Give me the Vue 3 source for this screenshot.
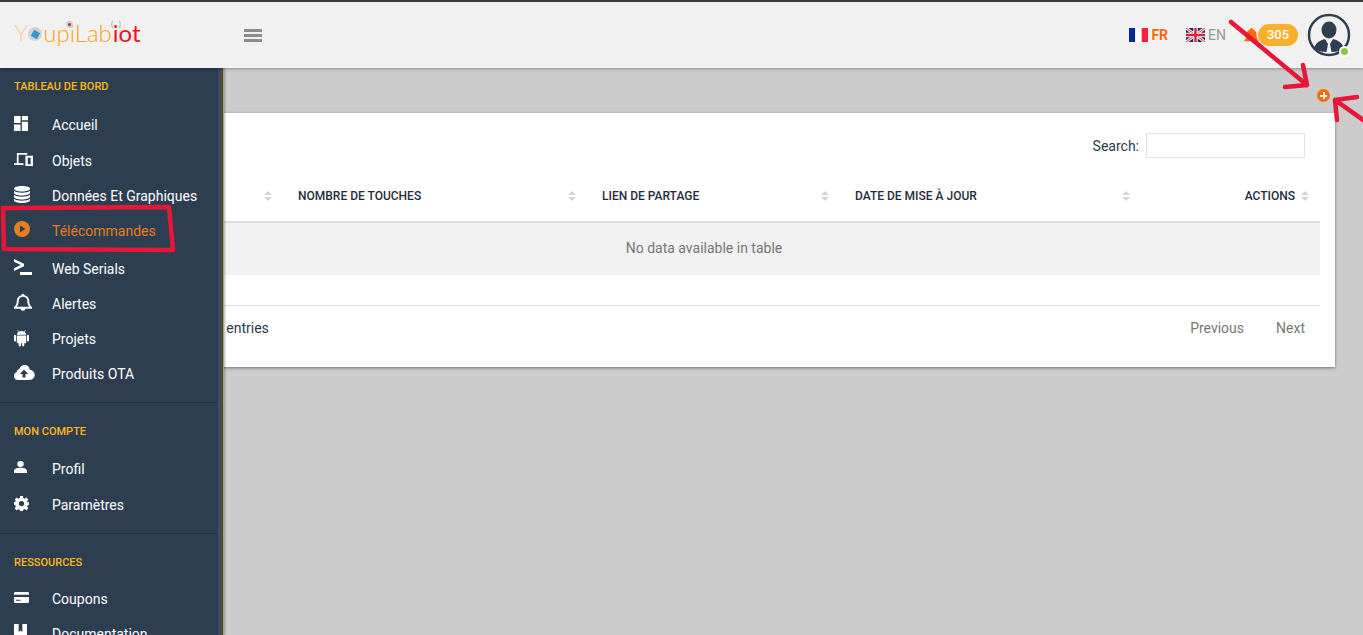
<script setup>
const main = [
  { label: 'Accueil', w: 14, h: 15, view: '0 0 16 16', d: 'M0 0h7.500v7.500H0zM9 0h7v4.500H9zM9 6h7v10H9zM0 9h7.500v7H0z', cls: 'first' },
  { label: 'Objets', w: 19, h: 13, view: '0 0 20 14', d: 'M3 0h11v1.800H4.800V11H10v2H0v-2h3zM12 3h8v11h-8zM14.500 5v7h3V5z', cls: 'r36' },
  { label: 'Données Et Graphiques', w: 16, h: 17, view: '0 0 16 17', d: 'M8 0c4.200 0 8 1 8 2.700S12.200 5.400 8 5.400 0 4.400 0 2.700 3.800 0 8 0zM0 4.800C1.500 6.200 5 6.700 8 6.700s6.500-.5 8-1.900v2C16 8.500 12.200 9.500 8 9.500S0 8.500 0 6.800zM0 8.800c1.500 1.400 5 1.900 8 1.900s6.500-.5 8-1.900v2c0 1.700-3.800 2.700-8 2.700s-8-1-8-2.700zM0 12.800c1.500 1.400 5 1.900 8 1.900s6.500-.5 8-1.900v1.500C16 16 12.200 17 8 17s-8-1-8-2.700z' },
  { label: 'Télécommandes', w: 16, h: 16, view: '0 0 16 16', d: 'M8 0a8 8 0 1 1 0 16A8 8 0 0 1 8 0zM6 4.500v7L11.500 8z', active: true },
  { label: 'Web Serials', w: 18, h: 16, view: '0 0 18 16', d: 'M0 0l10 4.800v2.400L0 12V9.300L6.800 6 0 2.700zM6 13h12v3H6z', cls: 'r38' },
  { label: 'Alertes', w: 18, h: 17, view: '0 0 16 18', d: 'M8 0c.8 0 1.300.5 1.300 1.200C11.900 1.800 13.500 4 13.500 7c0 4 1 5.500 2.500 7v1.500H10.200a2.200 2.200 0 0 1-4.400 0H0V14c1.500-1.500 2.500-3 2.500-7C2.500 4 4.100 1.800 6.700 1.200 6.700.5 7.200 0 8 0zM8 2.800C5.700 2.800 4.200 4.700 4.200 7c0 3.200-.6 5.200-1.700 6.500h11C12.400 12.200 11.800 10.200 11.800 7 11.800 4.700 10.300 2.800 8 2.800z' },
  { label: 'Projets', w: 15, h: 17, view: '0 0 16 18', d: 'M4 1l1.300 1.800a6 6 0 0 1 5.400 0L12 1l.6.400-1.200 1.900A4.500 4.500 0 0 1 13 6H3a4.500 4.500 0 0 1 1.600-2.700L3.400 1.400zM3 7h10v7a1 1 0 0 1-1 1h-1v2.200a1.200 1.200 0 0 1-2.400 0V15H7.400v2.200a1.200 1.200 0 0 1-2.400 0V15H4a1 1 0 0 1-1-1zM0 7.200a1 1 0 0 1 2.200 0v5a1 1 0 0 1-2.200 0zM13.800 7.200a1 1 0 0 1 2.200 0v5a1 1 0 0 1-2.200 0z' },
  { label: 'Produits OTA', w: 20, h: 15, view: '0 0 20 15', d: 'M10.500 0c2.800 0 5 2 5.300 4.800A5 5 0 0 1 15.500 15H4a4 4 0 0 1-1.500-7.700A5 5 0 0 1 5.500 3.500 5.500 5.500 0 0 1 10.500 0zM10 4.500L5.800 9H8.500v3.500h3V9h2.700z' }
]
const account = [
  { label: 'Profil', w: 13, h: 12, view: '0 0 14 14', d: 'M7 0a3.500 3.500 0 1 1 0 7A3.500 3.500 0 0 1 7 0zM0 14v-2c0-2.500 2.500-4 7-4s7 1.500 7 4v2z' },
  { label: 'Paramètres', w: 15, h: 15, view: '0 0 16 16', d: 'M6.500 0h3l.4 2.200 1.400.6L13.200 1.500l2.100 2.100L14 5.500l.6 1.400L16 6.500v3l-1.400.4-.6 1.400 1.300 1.900-2.100 2.100-1.900-1.300-1.400.6L9.500 16h-3l-.4-1.400-1.400-.6-1.900 1.300L.7 13.200 2 11.300l-.6-1.400L0 9.500v-3l1.400-.4.6-1.400L.7 3.600 2.800 1.500l1.900 1.300 1.400-.6zM8 5.200a2.800 2.800 0 1 0 0 5.600 2.800 2.800 0 0 0 0-5.600z' }
]
const resources = [
  { label: 'Coupons', w: 15, h: 11, view: '0 0 16 12', d: 'M1.500 0h13A1.500 1.500 0 0 1 16 1.500V3H0V1.500A1.500 1.500 0 0 1 1.500 0zM0 5.500h16v5a1.500 1.500 0 0 1-1.500 1.500h-13A1.500 1.500 0 0 1 0 10.500zM2 8.500v1h5v-1z' },
  { label: 'Documentation', w: 13, h: 16, view: '0 0 14 16', d: 'M1 0h13v16H1a1 1 0 0 1-1-1V1a1 1 0 0 1 1-1zM5 0v8l2-1.500L9 8V0z' }
]
const columns = [
  { label: '' },
  { label: 'Nombre de touches' },
  { label: 'Lien de partage' },
  { label: 'Date de mise à jour' },
  { label: 'Actions', right: true }
]
</script>

<template>
  <div class="page">
    <header class="topbar">
      <div class="logo">
        <span class="logo-y">Y</span><span class="logo-o"><i></i></span><span class="logo-lab">upiLab</span><span class="logo-iot">iot</span>
        <i class="logo-dot"></i>
        <svg class="logo-wifi" viewBox="0 0 12 10" fill="none" stroke="#c4c4c4" stroke-width="1.500"><path d="M2.500 1C.8 3.500.8 6.500 2.500 9M9.500 1c1.700 2.500 1.700 5.500 0 8" /></svg>
      </div>
      <button class="burger" aria-label="menu"><i></i><i></i><i></i></button>
      <div class="top-right">
        <span class="lang active">
          <svg class="flag" viewBox="0 0 19 14"><rect width="6.300" height="14" fill="#002a8f"/><rect x="6.300" width="6.400" height="14" fill="#fff"/><rect x="12.700" width="6.300" height="14" fill="#f5213f"/></svg>
          FR
        </span>
        <span class="lang">
          <svg class="flag" viewBox="0 0 19 14"><rect width="19" height="14" fill="#1c2a6b"/><path d="M0 0l19 14M19 0L0 14" stroke="#fff" stroke-width="2.800"/><path d="M0 0l19 14M19 0L0 14" stroke="#d8203a" stroke-width="1"/><path d="M9.500 0v14M0 7h19" stroke="#fff" stroke-width="4.400"/><path d="M9.500 0v14M0 7h19" stroke="#d8203a" stroke-width="2.400"/></svg>
          EN
        </span>
        <span class="notif">
          <svg class="bell" viewBox="0 0 16 16"><path fill="#ff6a00" d="M8 0c.8 0 1.300.5 1.300 1.200 2.500.6 4 2.800 4 5.800 0 3.500.8 4.800 2.200 6v1H.5v-1C1.900 11.800 2.700 10.500 2.700 7c0-3 1.500-5.200 4-5.800C6.700.5 7.200 0 8 0z"/></svg>
          <span class="badge">305</span>
        </span>
        <span class="avatar">
          <svg viewBox="0 0 44 44">
            <circle cx="22" cy="22" r="20" fill="#f1f1f1" stroke="#2f3e50" stroke-width="2.500"/>
            <ellipse cx="22" cy="17" rx="7.500" ry="8.500" fill="#2f3e50"/>
            <path fill="#2f3e50" d="M7 35c2-6 7-8 11-9l3 5-1.500 8C14 39 10 37.500 7 35zM37 35c-2-6-7-8-11-9l-3 5 1.500 8C30 39 34 37.500 37 35z"/>
          </svg>
          <i class="online"></i>
        </span>
      </div>
    </header>

    <main class="content">
      <section class="card">
        <div class="search-row">
          <label class="search">Search: <input type="text" /></label>
        </div>
        <table class="grid">
          <colgroup>
            <col class="c1" /><col class="c2" /><col class="c3" /><col class="c4" /><col class="c5" />
          </colgroup>
          <thead>
            <tr>
              <th v-for="(c, i) in columns" :key="i" :class="{ right: c.right }">
                {{ c.label }}
                <span class="sort"><i class="up"></i><i class="down"></i></span>
              </th>
            </tr>
          </thead>
          <tbody>
            <tr><td colspan="5">No data available in table</td></tr>
          </tbody>
        </table>
        <div class="table-footer">
          <span class="info">Showing 0 to 0 of 0 entries</span>
          <span class="pager"><a>Previous</a><a>Next</a></span>
        </div>
      </section>
      <button class="add" aria-label="ajouter"></button>
    </main>

    <aside class="sidebar">
      <div class="group">
        <h4 class="heading">Tableau de bord</h4>
        <a v-for="m in main" :key="m.label" class="item" :class="[m.cls, { on: m.active }]">
          <span class="ico"><svg :viewBox="m.view" :width="m.w" :height="m.h" preserveAspectRatio="none"><path :d="m.d" fill-rule="evenodd" /></svg></span>{{ m.label }}
        </a>
      </div>
      <div class="group second">
        <h4 class="heading">Mon compte</h4>
        <a v-for="m in account" :key="m.label" class="item">
          <span class="ico"><svg :viewBox="m.view" :width="m.w" :height="m.h" preserveAspectRatio="none"><path :d="m.d" fill-rule="evenodd" /></svg></span>{{ m.label }}
        </a>
      </div>
      <div class="group third">
        <h4 class="heading">Ressources</h4>
        <a v-for="m in resources" :key="m.label" class="item">
          <span class="ico"><svg :viewBox="m.view" :width="m.w" :height="m.h" preserveAspectRatio="none"><path :d="m.d" fill-rule="evenodd" /></svg></span>{{ m.label }}
        </a>
      </div>
    </aside>

    <svg class="marks" viewBox="0 0 1363 635" fill="none" stroke="#e8173a" stroke-width="4.500" stroke-linecap="round" stroke-linejoin="round">
      <path d="M3 208 L169 207 L173 250 L4 249 Z" />
      <path d="M1231 22 L1307 85 M1303 65 L1307 85 L1285 87" />
      <path d="M1366 122 L1335 100 M1357 97 L1335 100 L1337 120" />
    </svg>
  </div>
</template>

<style>
html, body { margin: 0; overflow: hidden; }
</style>

<style scoped>
.page {
  position: relative;
  height: 635px;
  overflow: hidden;
  background: #cccccc;
  font-family: Roboto, "Liberation Sans", sans-serif;
  font-size: 14px;
  color: #2b3a4a;
}
.topbar {
  position: relative;
  z-index: 2;
  box-sizing: border-box;
  height: 68px;
  display: flex;
  align-items: center;
  background: #f1f1f1;
  border-top: 2px solid #3a3a3a;
  box-shadow: 0 1px 3px rgba(0, 0, 0, .3);
  padding-left: 14px;
}
.logo {
  position: relative;
  width: 230px;
  display: flex;
  align-items: center;
  padding-bottom: 5px;
  font-family: Lato, sans-serif;
  font-weight: 300;
  font-size: 24px;
  line-height: 1;
  color: #fca21c;
}
.logo-y { color: #fdcf98; }
.logo-o {
  width: 14px;
  height: 14px;
  margin: 3px 1px 0 0;
  border-radius: 50%;
  background: #d3d3d3;
  display: grid;
  place-items: center;
}
.logo-o i {
  width: 7px;
  height: 7px;
  background: #3d94c8;
  transform: rotate(30deg);
}
.logo-iot { color: #f8101c; margin-left: 1px; font-weight: 400; }
.logo-dot {
  position: absolute;
  left: 52px;
  top: 0;
  width: 3px;
  height: 3px;
  border: 2px solid #cfcfcf;
  border-radius: 50%;
  background: #e0202c;
}
.logo-wifi {
  position: absolute;
  left: 96px;
  top: -1px;
  width: 12px;
  height: 9px;
}
.burger {
  width: 18px;
  height: 13px;
  padding: 0;
  border: 0;
  background: none;
  display: flex;
  flex-direction: column;
  justify-content: space-between;
}
.burger i { display: block; height: 3px; background: #8c8c8c; }
.top-right {
  margin-left: auto;
  display: flex;
  align-items: center;
  padding-right: 12px;
}
.lang {
  display: flex;
  align-items: center;
  gap: 3px;
  margin-right: 18px;
  font-size: 14px;
  color: #999;
}
.lang.active { color: #ff6a00; font-weight: 700; }
.flag { width: 19px; height: 14px; }
.notif { display: flex; align-items: center; margin-right: 9px; }
.bell { width: 15px; height: 15px; margin-right: -1px; }
.badge {
  width: 40px;
  height: 22px;
  border-radius: 11px;
  background: #fbb02d;
  color: #fff;
  font-size: 13px;
  font-weight: 500;
  line-height: 22px;
  text-align: center;
}
.avatar { position: relative; width: 44px; height: 44px; }
.avatar svg { display: block; width: 44px; height: 44px; }
.online {
  position: absolute;
  right: 1px;
  bottom: 0;
  width: 7px;
  height: 7px;
  border: 2px solid #fff;
  border-radius: 50%;
  background: #8cc63f;
}
.content {
  position: relative;
  padding: 45px 28px 0 73px;
}
.card {
  box-sizing: border-box;
  height: 254px;
  padding: 20px 15px 0;
  background: #fff;
  box-shadow: 0 1px 3px rgba(0, 0, 0, .45);
}
.search-row { display: flex; justify-content: flex-end; height: 25px; padding-right: 15px; }
.search { display: flex; align-items: center; gap: 7px; }
.search input {
  box-sizing: border-box;
  width: 159px;
  height: 25px;
  border: 1px solid #e3e3e3;
  background: #fff;
  padding: 0;
}
.grid {
  width: 1232px;
  margin-top: 20px;
  table-layout: fixed;
  border-collapse: separate;
  border-spacing: 0;
}
.c1 { width: 195px; }
.c2 { width: 304px; }
.c3 { width: 253px; }
.c4 { width: 301px; }
.c5 { width: 179px; }
th {
  position: relative;
  box-sizing: border-box;
  height: 45px;
  padding: 0 15px 8px;
  border-bottom: 2px solid #dddddd;
  text-align: left;
  text-transform: uppercase;
  font-size: 12px;
  font-weight: 500;
  color: #1f2d3d;
}
th.right { text-align: right; padding-right: 25px; }
.sort {
  position: absolute;
  right: 11px;
  top: 13px;
  display: flex;
  flex-direction: column;
  gap: 2px;
}
.sort i { display: block; width: 0; height: 0; border-left: 4.500px solid transparent; border-right: 4.500px solid transparent; }
.sort .up { border-bottom: 4.500px solid #d5d5d5; }
.sort .down { border-top: 4.500px solid #d5d5d5; }
td {
  box-sizing: border-box;
  height: 52px;
  padding: 0 0 2px;
  background: #f2f2f2;
  text-align: center;
  color: #777;
}
.table-footer {
  display: flex;
  justify-content: space-between;
  align-items: center;
  height: 44px;
  margin-top: 30px;
  border-top: 1px solid #dddddd;
}
.info { padding-left: 15px; }
.pager { display: flex; gap: 32px; padding-right: 15px; color: #777; }
.sidebar {
  position: absolute;
  z-index: 1;
  left: 0;
  top: 68px;
  bottom: 0;
  box-sizing: border-box;
  width: 223px;
  background: #2c3e50;
  border-right: 5px solid #3f4c5e;
  box-shadow: 1px 0 0 #c9a227, 2px 0 2px rgba(0, 0, 0, .3);
  color: #fff;
}
.group { height: 335px; border-bottom: 1px solid #1f3547; box-sizing: border-box; }
.group.second { height: 131px; }
.group.third { border: 0; }
.heading {
  margin: 0;
  padding: 12px 0 0 14px;
  height: 27px;
  box-sizing: border-box;
  line-height: 14px;
  font-size: 11px;
  font-weight: 500;
  text-transform: uppercase;
  color: #ffb81c;
}
.item {
  display: flex;
  align-items: center;
  height: 35px;
  font-size: 14px;
  color: #fff;
}
.item.first { margin-top: 12px; }
.item.r36 { margin-top: 1px; }
.item.r38 { margin-top: 3px; }
.second .heading { padding-top: 22px; height: 38px; }
.second .heading + .item { margin-top: 10px; }
.second .item + .item { margin-top: 1px; }
.third .heading { padding-top: 22px; height: 38px; }
.third .heading + .item { margin-top: 9px; }
.ico { display: flex; padding-left: 14px; box-sizing: border-box; flex: 0 0 52px; margin-top: -3px; }
.ico svg { display: block; fill: #fff; overflow: visible; }
.item.on { color: #e67e22; }
.item.on .ico svg { fill: #e67e22; }
.add {
  position: absolute;
  left: 1317px;
  top: 21px;
  width: 13px;
  height: 13px;
  padding: 0;
  border: 0;
  border-radius: 50%;
  background: #ff6a00;
}
.add::before, .add::after {
  content: "";
  position: absolute;
  background: #fff;
}
.add::before { left: 3px; right: 3px; top: 5.500px; height: 2px; }
.add::after { top: 3px; bottom: 3px; left: 5.500px; width: 2px; }
.marks {
  position: absolute;
  inset: 0;
  z-index: 3;
  width: 1363px;
  height: 635px;
  pointer-events: none;
}
</style>
